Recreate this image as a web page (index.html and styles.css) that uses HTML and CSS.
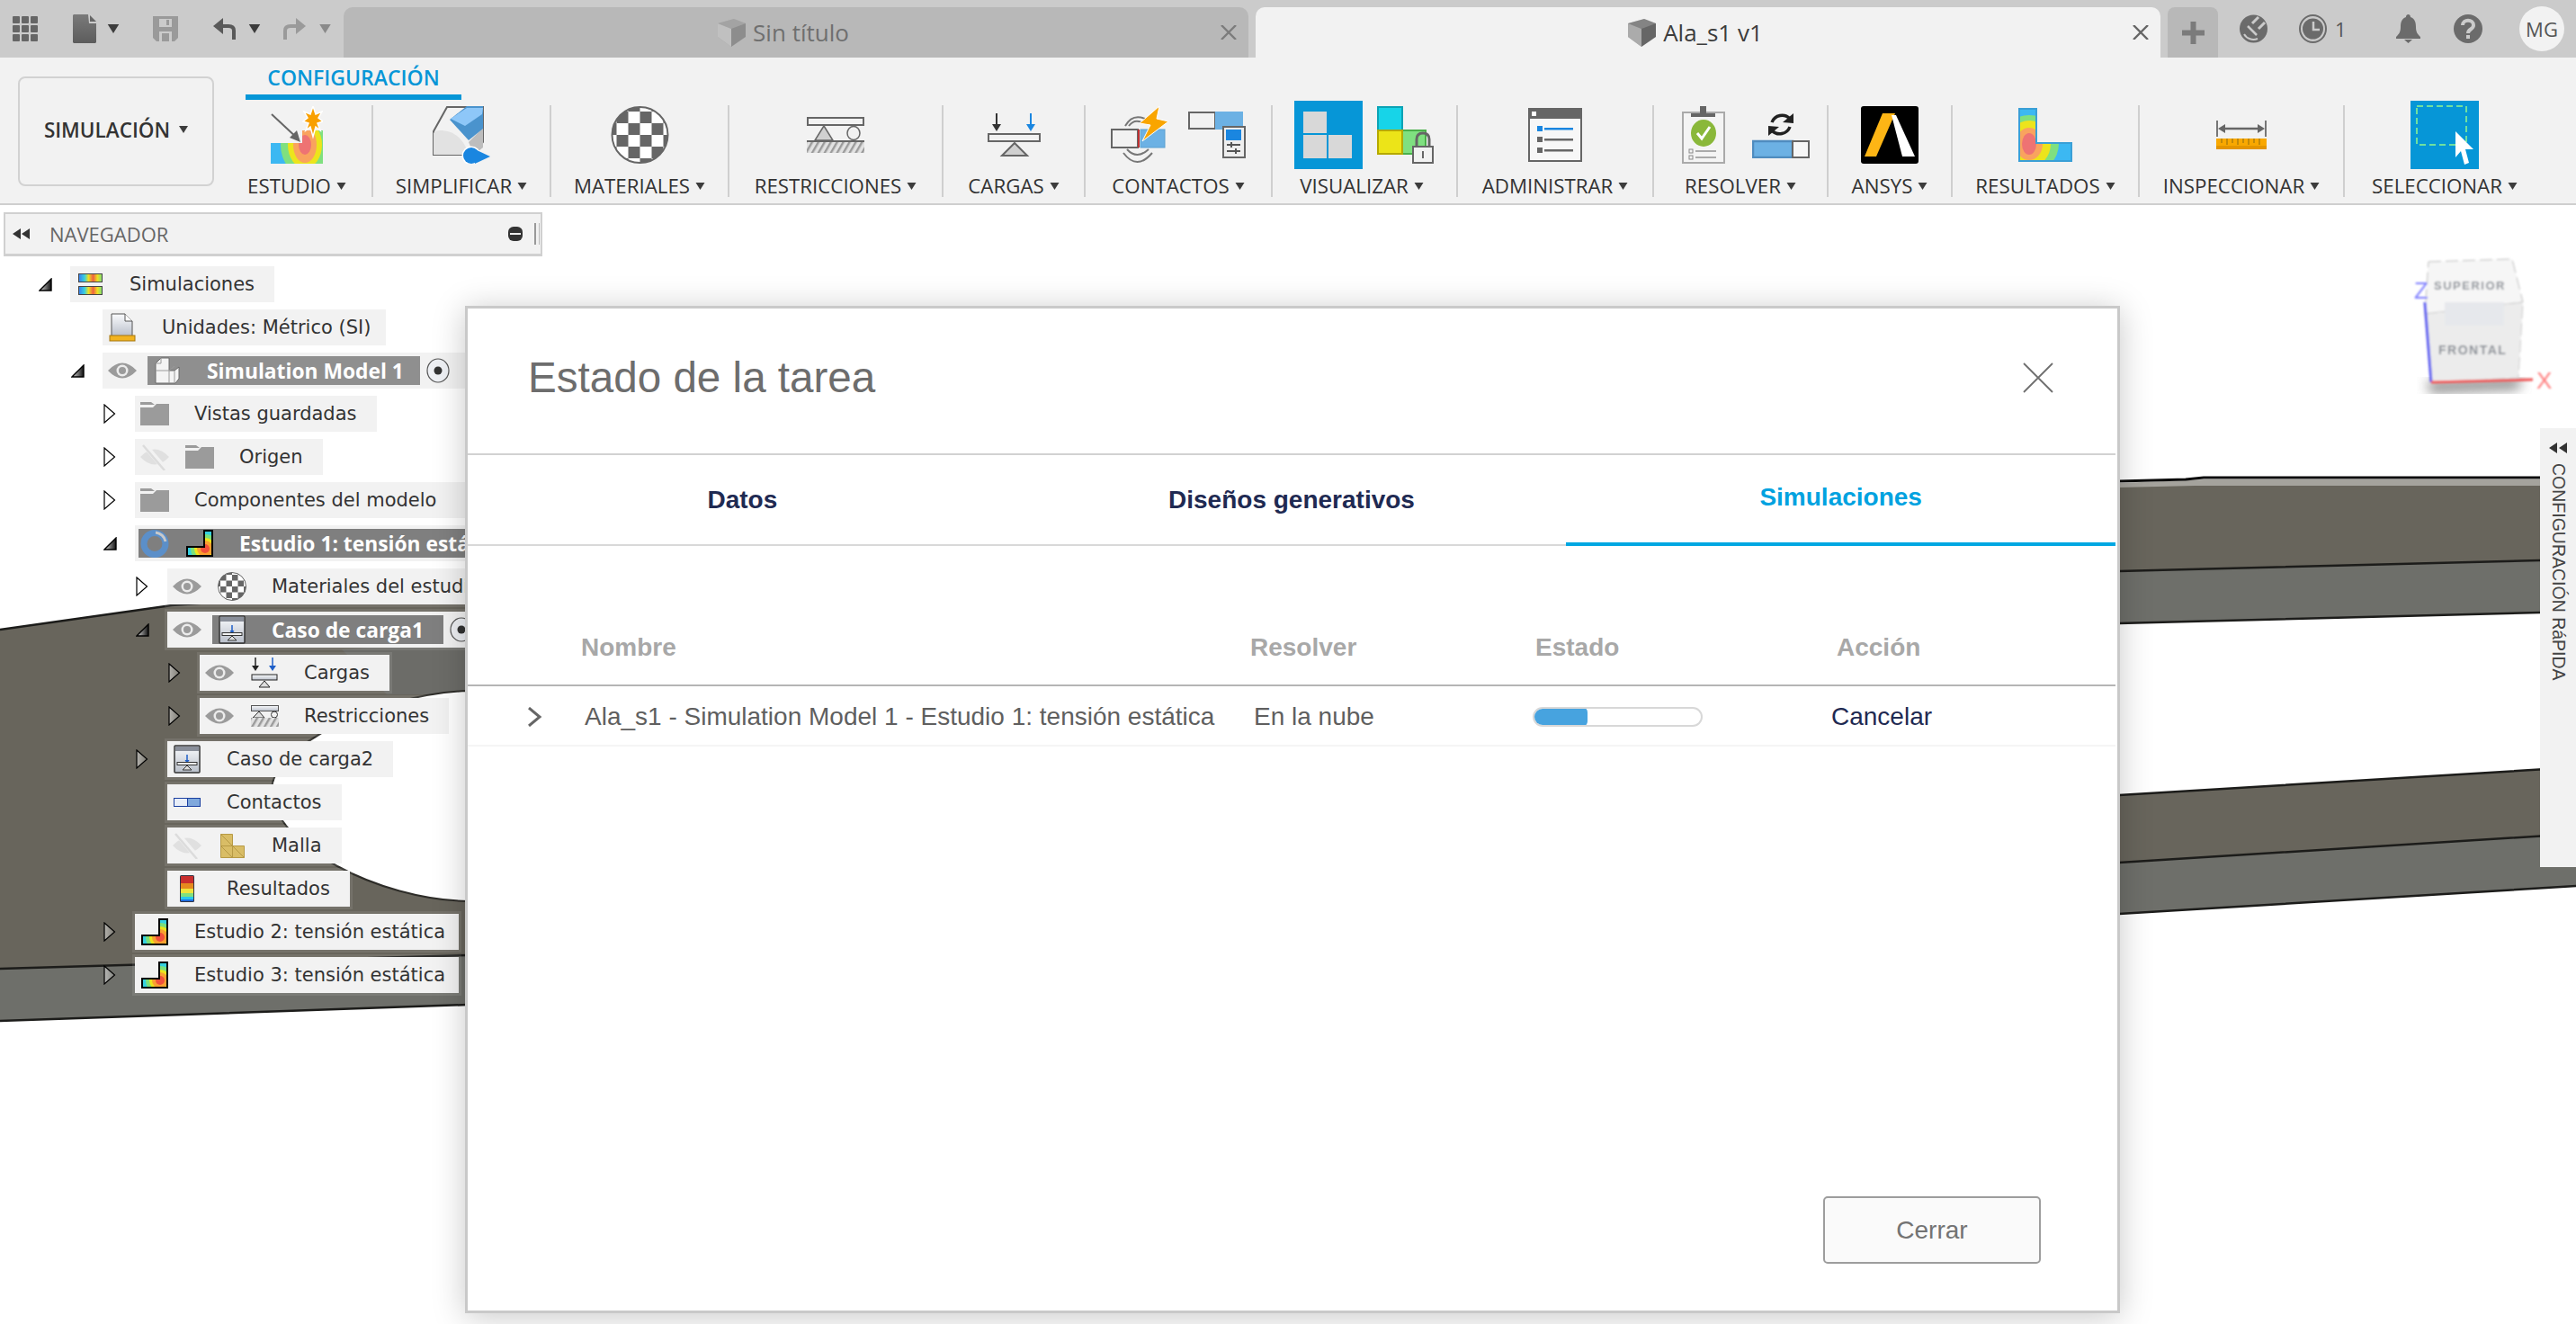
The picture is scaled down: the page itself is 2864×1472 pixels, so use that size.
FILE: index.html
```html
<!DOCTYPE html>
<html lang="es">
<head>
<meta charset="utf-8">
<title>Estado de la tarea</title>
<link rel="stylesheet" href="styles.css">
</head>
<body>
<svg class="sprite" width="0" height="0" aria-hidden="true">
  <defs>
    <clipPath id="fea-clip"><path d="M1 1H20V39H59V59H1Z"/></clipPath>
    <clipPath id="feb-clip"><path d="M20 1H29V29H1V19H20Z"/></clipPath>
    <clipPath id="ball-clip"><circle cx="32" cy="32" r="31"/></clipPath>
    <clipPath id="est-clip"><path d="M35 27H58V64H0V41H35Z"/></clipPath>
    <pattern id="chk" width="26" height="26" patternUnits="userSpaceOnUse" x="6" y="6">
      <rect width="13" height="13" fill="#666"/><rect x="13" y="13" width="13" height="13" fill="#666"/>
    </pattern>
    <pattern id="hatch" width="6" height="6" patternUnits="userSpaceOnUse" patternTransform="rotate(30)">
      <rect width="6" height="6" fill="#e2e2e2"/><rect width="2.4" height="6" fill="#9b9b9b"/>
    </pattern>
    <linearGradient id="grad-open" x1="0" y1="0" x2="1" y2="0"><stop offset="0" stop-color="#ddd"/><stop offset="1" stop-color="#111"/></linearGradient>
    <linearGradient id="grad-closed" x1="0" y1="0" x2="1" y2="0"><stop offset="0" stop-color="#fff" stop-opacity=".5"/><stop offset="1" stop-color="#fff" stop-opacity=".15"/></linearGradient>
    <linearGradient id="grad-box" x1="0" y1="0" x2="0" y2="1"><stop offset="0" stop-color="#fafbfd"/><stop offset="1" stop-color="#b9bfca"/></linearGradient>
    <linearGradient id="grad-file" x1="0" y1="0" x2="0" y2="1"><stop offset="0" stop-color="#7a7a7a"/><stop offset="1" stop-color="#5c5c5c"/></linearGradient>
    <linearGradient id="grad-rb" x1="0" y1="0" x2="1" y2="0"><stop offset="0" stop-color="#3a7cf0"/><stop offset=".25" stop-color="#35d0e0"/><stop offset=".42" stop-color="#eee020"/><stop offset=".62" stop-color="#f06040"/><stop offset=".8" stop-color="#eee020"/><stop offset="1" stop-color="#7be07b"/></linearGradient>

    <symbol id="fea" viewBox="0 0 60 60">
      <g clip-path="url(#fea-clip)">
        <rect width="60" height="60" fill="#3cb8f2"/>
        <ellipse cx="12" cy="40" rx="33" ry="32" fill="#7fe07f"/>
        <ellipse cx="12" cy="40" rx="24" ry="26" fill="#ece41c"/>
        <ellipse cx="12" cy="40" rx="15" ry="18" fill="#f9a35e"/>
        <ellipse cx="12" cy="40" rx="8" ry="12" fill="#ee7373"/>
      </g>
      <path d="M1 1H20V39H59V59H1Z" fill="none" stroke="#3a9fd6" stroke-width="2"/>
    </symbol>
    <symbol id="feb" viewBox="0 0 30 30">
      <g clip-path="url(#feb-clip)">
        <rect width="30" height="30" fill="#3a7cf0"/>
        <circle cx="21" cy="21" r="21" fill="#35d0e0"/>
        <circle cx="21" cy="21" r="16" fill="#7be07b"/>
        <circle cx="21" cy="21" r="12" fill="#ece41c"/>
        <circle cx="21" cy="21" r="9" fill="#f9a030"/>
        <circle cx="21" cy="21" r="5" fill="#f0503c"/>
      </g>
      <path d="M20 1H29V29H1V19H20Z" fill="none" stroke="#000" stroke-width="2"/>
    </symbol>
    <symbol id="ball" viewBox="0 0 64 64">
      <circle cx="32" cy="32" r="31" fill="#fff"/>
      <rect width="64" height="64" fill="url(#chk)" clip-path="url(#ball-clip)"/>
      <circle cx="32" cy="32" r="31" fill="none" stroke="#666" stroke-width="2"/>
    </symbol>
    <symbol id="eye" viewBox="0 0 32 20">
      <path d="M0 10Q16-7 32 10Q16 27 0 10Z" fill="#9b9b9b"/>
      <circle cx="16" cy="10" r="6.5" fill="#ececec"/><circle cx="16" cy="10" r="4" fill="#9b9b9b"/>
    </symbol>
    <symbol id="eyeoff" viewBox="0 0 32 30">
      <path d="M0 15Q16-2 32 15Q16 32 0 15Z" fill="#e0e0e0"/>
      <path d="M4 1L28 29" stroke="#f2f2f2" stroke-width="6"/><path d="M3 2L27 30" stroke="#dcdcdc" stroke-width="2.5"/>
    </symbol>
    <symbol id="folder" viewBox="0 0 32 26">
      <path d="M0 0H12L16 3H14H0Z" fill="#9b9b9b"/><path d="M0 6H14L18 2H32V26H0Z" fill="#9b9b9b"/>
    </symbol>
    <symbol id="tw-open" viewBox="0 0 15 15"><path d="M14 1V14H1Z" fill="url(#grad-open)" stroke="#000" stroke-width="1.4"/></symbol>
    <symbol id="tw-closed" viewBox="0 0 14 22"><path d="M1 1L12.5 11L1 21Z" fill="url(#grad-closed)" stroke="#000" stroke-width="1.2"/></symbol>
    <symbol id="caso" viewBox="0 0 30 32">
      <rect x="1" y="1" width="28" height="30" rx="1" fill="url(#grad-box)" stroke="#333" stroke-width="1.5"/>
      <rect x="2" y="2" width="26" height="5" fill="#8a8f9a"/>
      <path d="M15 11V19" stroke="#1f5fc8" stroke-width="1.5"/><path d="M12.5 17H17.5L15 21Z" fill="#1f5fc8"/>
      <rect x="4" y="19.500" width="22" height="3" fill="#f2f2f2" stroke="#333"/>
      <path d="M15 23L20 28H10Z" fill="#ddd" stroke="#333"/>
    </symbol>
    <symbol id="caret" viewBox="0 0 10 8"><path d="M0 0H10L5 8Z" fill="#3c3c3c"/></symbol>
    <symbol id="cube" viewBox="0 0 32 32">
      <path d="M1 6L19 1L32 6V21L16 32L1 21Z" fill="currentColor"/>
      <path d="M1 6L16 12V32L1 21Z" fill="#fff" opacity=".45"/>
      <path d="M1 6L19 1L32 6L16 12Z" fill="#fff" opacity=".2"/>
    </symbol>
  </defs>
</svg>

<div class="app">
  <svg class="scene" width="2864" height="1472" viewBox="0 0 2864 1472" aria-hidden="true">
    <defs>
      <filter id="blur1"><feGaussianBlur stdDeviation=".8"/></filter>
      <filter id="blur6"><feGaussianBlur stdDeviation="7"/></filter>
    </defs>
    <path d="M0 700L191 673L520 650V1062L0 1077Z" fill="#68655c"/>
    <path d="M0 1077L520 1062V1117L0 1135Z" fill="#6e6f6a"/>
    <path d="M380 722L520 712V772L430 772Z" fill="#6c6c68"/>
    <path d="M520 768C420 772 300 830 302 880C305 940 420 1000 520 1002Z" fill="#fff" stroke="#2d2c28" stroke-width="2"/>
    <path d="M0 700L191 673L520 650M0 1077L520 1062M0 1135L520 1117" fill="none" stroke="#1c1c1a" stroke-width="2.500"/>
    <path d="M2356 538H2864V623L2356 635Z" fill="#68655c"/>
    <path d="M2356 635L2864 622V680L2356 693Z" fill="#6e6f6a"/>
    <path d="M2356 537L2430 534L2450 533H2864V540H2440L2356 542Z" fill="#a5a39d"/>
    <path d="M2356 535L2430 533L2450 531H2864" fill="none" stroke="#0b0b0b" stroke-width="3"/>
    <path d="M2356 635L2864 622M2356 693L2864 680" fill="none" stroke="#1c1c1a" stroke-width="2.500"/>
    <path d="M2356 884L2864 853V927L2356 959Z" fill="#68655c"/>
    <path d="M2356 959L2864 927V985L2356 1016Z" fill="#6e6f6a"/>
    <path d="M2356 884L2864 853M2356 959L2864 927M2356 1016L2864 985" fill="none" stroke="#1c1c1a" stroke-width="2.500"/>
    <path d="M2698 425L2804 421L2800 432L2702 436Z" fill="#777" filter="url(#blur6)"/>
    <g filter="url(#blur1)">
      <path d="M2700 291L2793 288L2805 336L2696 349Z" fill="#f6f6f6" stroke="#bbb" stroke-dasharray="14 5"/>
      <path d="M2696 349L2805 336L2800 420L2703 425Z" fill="#ececec" stroke="#ccc" stroke-dasharray="14 5"/>
      <rect x="2718" y="336" width="66" height="26" fill="#e6e8ec"/>
      <text class="cube-text" x="2706" y="322">SUPERIOR</text>
      <text class="cube-text cube-front" x="2711" y="394">FRONTAL</text>
      <path d="M2696 336L2703 425" stroke="#5a5af0" stroke-width="3" fill="none"/>
      <path d="M2703 425L2816 422" stroke="#f05858" stroke-width="3" fill="none"/>
      <text class="axis axis-z" x="2684" y="332">Z</text>
      <text class="axis axis-x" x="2820" y="432">X</text>
    </g>
  </svg>

  <header class="topbar">
    <div class="tools">
      <svg class="t-grid" width="28" height="28" viewBox="0 0 28 28"><g fill="#666"><rect width="8" height="8" rx="1"/><rect x="10" width="8" height="8" rx="1"/><rect x="20" width="8" height="8" rx="1"/><rect y="10" width="8" height="8" rx="1"/><rect x="10" y="10" width="8" height="8" rx="1"/><rect x="20" y="10" width="8" height="8" rx="1"/><rect y="20" width="8" height="8" rx="1"/><rect x="10" y="20" width="8" height="8" rx="1"/><rect x="20" y="20" width="8" height="8" rx="1"/></g></svg>
      <svg class="t-file" width="26" height="32" viewBox="0 0 26 32"><path d="M1 0H17L18 10H26V31L25 32H1L0 31V1Z" fill="url(#grad-file)"/><path d="M19 1L26 8H19Z" fill="#666"/></svg>
      <svg class="t-c1" width="14" height="10"><use href="#caret"/></svg>
      <svg class="t-save" width="28" height="28" viewBox="0 0 28 28"><path d="M0 0H28V24L24 28H4L0 24Z" fill="#9a9a9a"/><rect x="7" y="3" width="14" height="9" fill="#cbcbcb"/><rect x="15" y="4" width="3" height="6" fill="#9a9a9a"/><rect x="7" y="17" width="14" height="11" fill="#cbcbcb"/><rect x="10" y="19" width="8" height="9" fill="#9a9a9a"/></svg>
      <svg class="t-undo" width="26" height="24" viewBox="0 0 26 24"><path d="M23 24V14Q23 9 17 9H5" fill="none" stroke="#595959" stroke-width="4"/><path d="M11 0L0 9L11 18Z" fill="#595959"/></svg>
      <svg class="t-c2" width="14" height="10"><use href="#caret"/></svg>
      <svg class="t-redo" width="26" height="24" viewBox="0 0 26 24"><path d="M3 24V14Q3 9 9 9H21" fill="none" stroke="#9a9a9a" stroke-width="4"/><path d="M15 0L26 9L15 18Z" fill="#9a9a9a"/></svg>
      <svg class="t-c3 dim" width="15" height="10"><use href="#caret"/></svg>
    </div>
    <div class="tab tab-off">
      <div class="tab-title"><svg class="cube cube-off" width="32" height="32"><use href="#cube"/></svg><span>Sin título</span></div>
      <svg class="tab-x" width="18" height="16" viewBox="0 0 18 16"><path d="M1 0L17 16M17 0L1 16" stroke="#7c7c7c" stroke-width="2.400"/></svg>
    </div>
    <div class="tab tab-on">
      <div class="tab-title"><svg class="cube cube-on" width="32" height="32"><use href="#cube"/></svg><span>Ala_s1 v1</span></div>
      <svg class="tab-x" width="18" height="16" viewBox="0 0 18 16"><path d="M1 0L17 16M17 0L1 16" stroke="#666" stroke-width="2.400"/></svg>
    </div>
    <div class="tab-add"><svg width="25" height="25" viewBox="0 0 25 25"><path d="M12.500 0V25M0 12.500H25" stroke="#7b7b7b" stroke-width="6"/></svg></div>
    <svg class="r-sync" width="31" height="32" viewBox="0 0 31 32"><circle cx="15.500" cy="16" r="15.500" fill="#6b6b6b"/><path d="M21 3L14 10M28 9L21 16" stroke="#cbcbcb" stroke-width="3"/><path d="M9 13L19 23" stroke="#cbcbcb" stroke-width="2.500"/><path d="M5 22A12 12 0 0 0 20 27" fill="none" stroke="#cbcbcb" stroke-width="2"/></svg>
    <svg class="r-clock" width="31" height="32" viewBox="0 0 31 32"><ellipse cx="15.500" cy="16" rx="14.500" ry="15" fill="none" stroke="#6b6b6b" stroke-width="2"/><circle cx="15.500" cy="16" r="11.500" fill="#6b6b6b"/><path d="M16 8V17H23" fill="none" stroke="#cbcbcb" stroke-width="2.500"/></svg>
    <span class="r-count">1</span>
    <svg class="r-bell" width="27" height="32" viewBox="0 0 27 32"><path d="M13.500 0C16 0 16 3 16 3C21 5 22 9 22 14C22 20 24 22 27 25V27H0V25C3 22 5 20 5 14C5 9 6 5 11 3C11 3 11 0 13.500 0Z" fill="#6b6b6b"/><path d="M9 28H18L13.500 32Z" fill="#6b6b6b"/></svg>
    <svg class="r-help" width="32" height="32" viewBox="0 0 32 32"><circle cx="16" cy="16" r="16" fill="#6b6b6b"/><path d="M10 12C10 5 22 5 22 12C22 17 16 16 16 21" fill="none" stroke="#cbcbcb" stroke-width="4"/><rect x="14" y="23" width="4" height="4" fill="#cbcbcb"/></svg>
    <div class="avatar">MG</div>
  </header>

  <section class="ribbon">
    <button class="mode"><span>SIMULACIÓN</span><svg width="10" height="8"><use href="#caret"/></svg></button>
    <div class="ribbon-main">
      <div class="rtab">CONFIGURACIÓN</div>
      <div class="groups">
        <div class="group">
          <div class="icons">
            <svg width="58" height="64" viewBox="0 0 58 64">
              <g clip-path="url(#est-clip)"><rect width="58" height="64" fill="#3cb8f2"/><ellipse cx="38" cy="43" rx="27" ry="34" fill="#7fe07f"/><ellipse cx="38" cy="43" rx="19" ry="26" fill="#ece41c"/><ellipse cx="38" cy="43" rx="13" ry="20" fill="#f9a35e"/><ellipse cx="38" cy="43" rx="7" ry="11" fill="#ee7373"/></g>
              <path d="M1 9L31 37" stroke="#666" stroke-width="2"/><path d="M33 40L21 35L29 27Z" fill="#666"/>
              <path d="M47 0L50 9L57 6L53 13L58 17L52 19L55 27L50 23L47 34L44 23L39 27L42 19L36 17L41 13L37 6L44 9Z" fill="#f9a000" stroke="#fff" stroke-width="1.500"/>
            </svg>
          </div>
          <div class="lbl">ESTUDIO<svg width="11" height="8"><use href="#caret"/></svg></div>
        </div>
        <div class="group">
          <div class="icons">
            <svg width="64" height="64" viewBox="0 0 64 64">
              <path d="M1 54V28L16 1H56V40L44 54Z" fill="#f2f2f2" stroke="#666" stroke-width="2"/>
              <path d="M1 54V30Q3 27 8 27C22 27 34 34 40 54Z" fill="#e2e2e2"/>
              <path d="M40 40L56 24V46L46 54Z" fill="#bdbdbd"/>
              <path d="M38 0H56V25L40 38L19 15Z" fill="#4a93cd"/>
              <path d="M38 2H56L55 9L36 22L20 14Z" fill="#8ec7f8"/>
              <circle cx="43" cy="55" r="10.500" fill="#fff"/><circle cx="43" cy="55" r="9" fill="#1a86e0"/><path d="M47 48L64 56L47 64Z" fill="#1a86e0"/>
            </svg>
          </div>
          <div class="lbl">SIMPLIFICAR<svg width="11" height="8"><use href="#caret"/></svg></div>
        </div>
        <div class="group">
          <div class="icons"><svg width="65" height="64"><use href="#ball"/></svg></div>
          <div class="lbl">MATERIALES<svg width="11" height="8"><use href="#caret"/></svg></div>
        </div>
        <div class="group">
          <div class="icons">
            <svg width="64" height="40" viewBox="0 0 64 40">
              <rect x="1" y="1" width="62" height="8" fill="#f2f2f2" stroke="#666" stroke-width="2"/>
              <path d="M19 10L29 26H9Z" fill="#d0d0d0" stroke="#666" stroke-width="1.500"/>
              <ellipse cx="52" cy="18" rx="7" ry="7.500" fill="#f2f2f2" stroke="#666" stroke-width="1.500"/>
              <rect y="26" width="64" height="2.500" fill="#666"/><rect y="28" width="64" height="12" fill="url(#hatch)"/>
            </svg>
          </div>
          <div class="lbl">RESTRICCIONES<svg width="11" height="8"><use href="#caret"/></svg></div>
        </div>
        <div class="group">
          <div class="icons">
            <svg width="59" height="48" viewBox="0 0 59 48">
              <path d="M10 0V14" stroke="#333" stroke-width="2"/><path d="M5 12H15L10 20Z" fill="#333"/>
              <path d="M48 0V14" stroke="#1a86e0" stroke-width="2"/><path d="M43 12H53L48 20Z" fill="#1a86e0"/>
              <rect x="1" y="23" width="57" height="8" fill="#f2f2f2" stroke="#666" stroke-width="2"/>
              <path d="M30 33L44 47H16Z" fill="#d0d0d0" stroke="#666" stroke-width="2"/>
            </svg>
          </div>
          <div class="lbl">CARGAS<svg width="11" height="8"><use href="#caret"/></svg></div>
        </div>
        <div class="group">
          <div class="icons gap22">
            <svg width="64" height="64" viewBox="0 0 64 64">
              <path d="M16 22Q24 8 38 14M20 22Q26 14 34 18" fill="none" stroke="#777" stroke-width="2"/>
              <path d="M14 52Q29 72 46 52M18 48Q29 60 42 48" fill="none" stroke="#777" stroke-width="2"/>
              <rect x="1" y="26" width="29" height="20" fill="#f2f2f2" stroke="#666" stroke-width="2"/>
              <rect x="33" y="26" width="27" height="20" fill="#6cb1e4" stroke="#5b9fd0"/>
              <rect x="30" y="26" width="2" height="20" fill="#c23030"/>
              <path d="M54 0L32 19L44 21L35 39L64 17L51 14Z" fill="#f9a500" stroke="#fff"/>
            </svg>
            <svg width="64" height="52" viewBox="0 0 64 52">
              <rect x="1" y="1" width="29" height="18" fill="#f2f2f2" stroke="#666" stroke-width="2"/>
              <rect x="30" width="31" height="20" fill="#6cb1e4"/>
              <rect x="39" y="17" width="24" height="34" fill="#eee" stroke="#666" stroke-width="2"/>
              <rect x="42" y="20" width="17" height="12" fill="#1a86e0"/>
              <path d="M43 37H58M43 44H58" stroke="#555" stroke-width="2"/><path d="M48 34V40M53 41V47" stroke="#555" stroke-width="2"/>
            </svg>
          </div>
          <div class="lbl">CONTACTOS<svg width="11" height="8"><use href="#caret"/></svg></div>
        </div>
        <div class="group">
          <div class="icons gap16">
            <svg width="76" height="76" viewBox="0 0 76 76">
              <rect width="76" height="76" fill="#0696d7"/>
              <g fill="#d8d8d8"><rect x="10" y="12" width="26" height="24"/><rect x="10" y="38" width="26" height="26"/><rect x="38" y="38" width="26" height="26"/></g>
            </svg>
            <svg width="64" height="64" viewBox="0 0 64 64">
              <rect x="1" y="1" width="27" height="26" fill="#17d4e8" stroke="#0ca3b5" stroke-width="2"/>
              <rect x="28" y="27" width="26" height="26" fill="#7fe080" stroke="#4aaf4a" stroke-width="2"/>
              <rect x="1" y="27" width="27" height="26" fill="#ece418" stroke="#b5a900" stroke-width="2"/>
              <path d="M44 46V37Q44 30 51 30Q58 30 58 37V46" fill="none" stroke="#666" stroke-width="3"/>
              <rect x="40" y="45" width="22" height="18" fill="#f2f2f2" stroke="#666" stroke-width="2"/><path d="M51 50V58" stroke="#666" stroke-width="2"/>
            </svg>
          </div>
          <div class="lbl lbl-left">VISUALIZAR<svg width="11" height="8"><use href="#caret"/></svg></div>
        </div>
        <div class="group">
          <div class="icons">
            <svg width="60" height="60" viewBox="0 0 60 60">
              <rect x="1" y="1" width="58" height="58" fill="#f7f7f7" stroke="#666" stroke-width="2"/>
              <rect width="60" height="12" fill="#666"/><rect x="4" y="4" width="5" height="5" fill="#fff"/>
              <rect x="10" y="20" width="6" height="6" fill="#1a86e0"/><rect x="18" y="22" width="32" height="2.500" fill="#1a86e0"/>
              <rect x="10" y="32" width="6" height="6" fill="#666"/><rect x="18" y="34" width="32" height="2.500" fill="#666"/>
              <rect x="10" y="44" width="6" height="6" fill="#666"/><rect x="18" y="46" width="32" height="2.500" fill="#666"/>
            </svg>
          </div>
          <div class="lbl">ADMINISTRAR<svg width="11" height="8"><use href="#caret"/></svg></div>
        </div>
        <div class="group">
          <div class="icons gap30 shift">
            <svg width="48" height="64" viewBox="0 0 48 64">
              <rect x="1" y="7" width="46" height="56" fill="#f4f4f4" stroke="#aaa" stroke-width="2"/>
              <path d="M10 12V8H20V0H27V8H37V12Z" fill="#666"/>
              <ellipse cx="24" cy="30" rx="14" ry="15" fill="#8ab83a"/><path d="M17 30L22 36L31 23" fill="none" stroke="#fff" stroke-width="3"/>
              <rect x="8" y="48" width="4" height="4" fill="none" stroke="#888"/><rect x="8" y="55" width="4" height="4" fill="none" stroke="#888"/>
              <path d="M15 50H38M15 57H38" stroke="#aaa" stroke-width="2"/>
            </svg>
            <svg width="64" height="52" viewBox="0 0 64 52">
              <path d="M22 12A12 12 0 0 1 42 8" fill="none" stroke="#222" stroke-width="3.500"/><path d="M34 12L46 13L46 2Z" fill="#222"/>
              <path d="M42 17A12 12 0 0 1 22 21" fill="none" stroke="#222" stroke-width="3.500"/><path d="M30 17L18 16L18 27Z" fill="#222"/>
              <rect x="1" y="33" width="44" height="18" fill="#6cb1e4" stroke="#4f8cbf" stroke-width="2.500"/>
              <rect x="45" y="33" width="18" height="18" fill="#f7f7f7" stroke="#666" stroke-width="2"/>
            </svg>
          </div>
          <div class="lbl">RESOLVER<svg width="11" height="8"><use href="#caret"/></svg></div>
        </div>
        <div class="group">
          <div class="icons">
            <svg width="64" height="64" viewBox="0 0 64 64">
              <rect width="64" height="64" rx="3" fill="#000"/>
              <path d="M24 8H38L17 56H4Z" fill="#fdb515"/>
              <path d="M34 10H39L60 56H46Z" fill="#fff"/>
            </svg>
          </div>
          <div class="lbl">ANSYS<svg width="11" height="8"><use href="#caret"/></svg></div>
        </div>
        <div class="group">
          <div class="icons"><svg width="60" height="60"><use href="#fea"/></svg></div>
          <div class="lbl">RESULTADOS<svg width="11" height="8"><use href="#caret"/></svg></div>
        </div>
        <div class="group">
          <div class="icons">
            <svg width="56" height="32" viewBox="0 0 56 32">
              <path d="M1 0V18M55 0V18" stroke="#777" stroke-width="2"/>
              <path d="M6 9H50" stroke="#666" stroke-width="2.500"/><path d="M10 4V14L2 9ZM46 4V14L54 9Z" fill="#666"/>
              <rect y="20" width="56" height="12" fill="#f9a800"/><rect y="28" width="56" height="4" fill="#e49500"/>
              <path d="M6 20V25M12 20V27M18 20V25M24 20V27M30 20V25M36 20V27M42 20V25M48 20V27" stroke="#8a6a10" stroke-width="1"/>
            </svg>
          </div>
          <div class="lbl">INSPECCIONAR<svg width="11" height="8"><use href="#caret"/></svg></div>
        </div>
        <div class="group">
          <div class="icons">
            <svg width="76" height="76" viewBox="0 0 76 76">
              <rect width="76" height="76" fill="#0696d7"/>
              <rect x="7" y="6" width="55" height="43" fill="none" stroke="#6fe0a0" stroke-width="2" stroke-dasharray="7 4"/>
              <path d="M50 34V63L56 56L60 71L65 69L61 54L70 54Z" fill="#fff"/>
            </svg>
          </div>
          <div class="lbl">SELECCIONAR<svg width="11" height="8"><use href="#caret"/></svg></div>
        </div>
      </div>
    </div>
  </section>

  <div class="nav-head">
    <svg class="nav-back" width="19" height="12" viewBox="0 0 19 12"><path d="M9 0V12L0 6ZM19 0V12L10 6Z" fill="#333"/></svg>
    <span class="nav-title">NAVEGADOR</span>
    <svg class="nav-min" width="16" height="16" viewBox="0 0 16 16"><rect width="16" height="16" rx="6" fill="#333"/><rect x="2" y="7" width="12" height="2" fill="#eee"/></svg>
    <span class="nav-grip"></span>
  </div>

  <nav class="tree">
    <div class="row d0">
      <span class="tw"><svg width="15" height="15"><use href="#tw-open"/></svg></span>
      <div class="pill"><div class="item">
        <span class="ic"><svg width="27" height="24" viewBox="0 0 27 24"><rect x=".5" y=".5" width="26" height="9" fill="url(#grad-rb)" stroke="#444"/><rect x=".5" y="14.500" width="26" height="9" fill="url(#grad-rb)" stroke="#444"/></svg></span>
        <span>Simulaciones</span>
      </div></div>
    </div>
    <div class="row d1">
      <span class="tw"></span>
      <div class="pill"><div class="item item-tight">
        <span class="ic"><svg width="30" height="32" viewBox="0 0 30 32"><path d="M3 1H18L26 9V26H3Z" fill="url(#grad-box)" stroke="#555"/><path d="M18 1V9H26" fill="#fff" stroke="#555"/><rect x="1" y="25" width="28" height="6" fill="#f2b320" stroke="#a5770e"/></svg></span>
        <span>Unidades: Métrico (SI)</span>
      </div></div>
    </div>
    <div class="row d1">
      <span class="tw"><svg width="15" height="15"><use href="#tw-open"/></svg></span>
      <div class="pill">
        <span class="eye"><svg width="32" height="20"><use href="#eye"/></svg></span>
        <div class="sel sel-model"><div class="item item-bar">
          <span class="ic"><svg width="30" height="30" viewBox="0 0 30 30"><path d="M2 7L8 1H17V15H23L28 11V24L24 29H2Z" fill="#f4f4f4" stroke="#6a6a6a"/><path d="M2 15H17V29M8 1V7H2M17 15L23 10M23 15V29" fill="none" stroke="#9a9a9a"/></svg></span>
          <span>Simulation Model 1</span>
        </div></div>
        <svg class="radio" width="26" height="28" viewBox="0 0 26 28"><ellipse cx="13" cy="14" rx="12" ry="13" fill="#eef0f4" stroke="#555" stroke-width="1.200"/><circle cx="13" cy="14" r="4.500" fill="#333"/></svg>
      </div>
    </div>
    <div class="row d2">
      <span class="tw"><svg width="14" height="22"><use href="#tw-closed"/></svg></span>
      <div class="pill"><div class="item"><span class="ic"><svg width="32" height="26"><use href="#folder"/></svg></span><span>Vistas guardadas</span></div></div>
    </div>
    <div class="row d2">
      <span class="tw"><svg width="14" height="22"><use href="#tw-closed"/></svg></span>
      <div class="pill">
        <span class="eye"><svg width="32" height="30"><use href="#eyeoff"/></svg></span>
        <div class="item"><span class="ic"><svg width="32" height="26"><use href="#folder"/></svg></span><span>Origen</span></div>
      </div>
    </div>
    <div class="row d2">
      <span class="tw"><svg width="14" height="22"><use href="#tw-closed"/></svg></span>
      <div class="pill pill-under"><div class="item"><span class="ic"><svg width="32" height="26"><use href="#folder"/></svg></span><span>Componentes del modelo</span></div></div>
    </div>
    <div class="row d2">
      <span class="tw"><svg width="15" height="15"><use href="#tw-open"/></svg></span>
      <div class="pill pill-spin">
        <div class="sel sel-study">
          <svg class="spinner" width="32" height="31" viewBox="0 0 32 31"><circle cx="16" cy="15.500" r="12" fill="none" stroke="#5b8fc9" stroke-width="7"/><path d="M17 3A12.500 12.500 0 0 1 28 13" fill="none" stroke="#c9c9c9" stroke-width="3"/></svg>
          <div class="item"><span class="ic"><svg width="30" height="30"><use href="#feb"/></svg></span><span>Estudio 1: tensión estática</span></div>
        </div>
      </div>
    </div>
    <div class="row d3">
      <span class="tw"><svg width="14" height="22"><use href="#tw-closed"/></svg></span>
      <div class="pill">
        <span class="eye"><svg width="32" height="20"><use href="#eye"/></svg></span>
        <div class="item"><span class="ic"><svg width="32" height="32"><use href="#ball"/></svg></span><span>Materiales del estudio</span></div>
      </div>
    </div>
    <div class="row d3">
      <span class="tw"><svg width="15" height="15"><use href="#tw-open"/></svg></span>
      <div class="pill">
        <span class="eye"><svg width="32" height="20"><use href="#eye"/></svg></span>
        <div class="sel sel-case"><div class="item"><span class="ic"><svg width="30" height="32"><use href="#caso"/></svg></span><span>Caso de carga1</span></div></div>
        <svg class="radio" width="26" height="28" viewBox="0 0 26 28"><ellipse cx="13" cy="14" rx="12" ry="13" fill="#eef0f4" stroke="#555" stroke-width="1.200"/><circle cx="13" cy="14" r="4.500" fill="#333"/></svg>
      </div>
    </div>
    <div class="row d4">
      <span class="tw"><svg width="14" height="22"><use href="#tw-closed"/></svg></span>
      <div class="pill">
        <span class="eye"><svg width="32" height="20"><use href="#eye"/></svg></span>
        <div class="item"><span class="ic"><svg width="30" height="34" viewBox="0 0 30 34"><path d="M5 0V12" stroke="#222" stroke-width="1.500"/><path d="M1 9H9L5 15Z" fill="#222"/><path d="M24 0V12" stroke="#1f5fc8" stroke-width="1.500"/><path d="M20 9H28L24 15Z" fill="#1f5fc8"/><rect x="1" y="19" width="28" height="6" fill="url(#grad-box)" stroke="#222"/><path d="M15 26L21 33H9Z" fill="#ddd" stroke="#222"/></svg></span><span>Cargas</span></div>
      </div>
    </div>
    <div class="row d4">
      <span class="tw"><svg width="14" height="22"><use href="#tw-closed"/></svg></span>
      <div class="pill">
        <span class="eye"><svg width="32" height="20"><use href="#eye"/></svg></span>
        <div class="item"><span class="ic"><svg width="31" height="24" viewBox="0 0 31 24"><rect x=".5" y=".5" width="30" height="6" fill="url(#grad-box)" stroke="#555"/><path d="M9 7L15 14H2Z" fill="#ddd" stroke="#333"/><circle cx="26" cy="10.500" r="3.500" fill="#f2f2f2" stroke="#333"/><rect y="14" width="31" height="10" fill="url(#hatch)"/></svg></span><span>Restricciones</span></div>
      </div>
    </div>
    <div class="row d3">
      <span class="tw"><svg width="14" height="22"><use href="#tw-closed"/></svg></span>
      <div class="pill"><div class="item"><span class="ic"><svg width="30" height="32"><use href="#caso"/></svg></span><span>Caso de carga2</span></div></div>
    </div>
    <div class="row d3">
      <span class="tw"></span>
      <div class="pill"><div class="item"><span class="ic"><svg width="30" height="10" viewBox="0 0 30 10"><rect x=".5" y=".5" width="15" height="9" fill="#e8eef8" stroke="#1a3fa0"/><rect x="15.500" y=".5" width="14" height="9" fill="#7fa8dc" stroke="#1a3fa0"/></svg></span><span>Contactos</span></div></div>
    </div>
    <div class="row d3">
      <span class="tw"></span>
      <div class="pill">
        <span class="eye"><svg width="32" height="30"><use href="#eyeoff"/></svg></span>
        <div class="item"><span class="ic"><svg width="27" height="27" viewBox="0 0 27 27"><path d="M.5.5H13.500V13.500H26.500V26.500H.5Z" fill="#d9bd66" stroke="#b79a45"/><path d="M.5 13.500H13.500V26.500M.5.5L13.500 13.500M.5 13.500L13.500 26.500M13.500 13.500L26.500 26.500" fill="none" stroke="#b79a45"/></svg></span><span>Malla</span></div>
      </div>
    </div>
    <div class="row d3">
      <span class="tw"></span>
      <div class="pill"><div class="item"><span class="ic"><svg width="16" height="30" viewBox="0 0 16 30"><rect width="16" height="30" rx="1.500" fill="#334"/><rect x="1" y="1" width="14" height="8" fill="#c92e2e"/><rect x="1" y="9" width="14" height="6" fill="#e68a1e"/><rect x="1" y="15" width="14" height="5" fill="#eee43c"/><rect x="1" y="20" width="14" height="4" fill="#7fe07f"/><rect x="1" y="24" width="14" height="3" fill="#27c7ee"/><rect x="1" y="27" width="14" height="2" fill="#1e6fe0"/></svg></span><span>Resultados</span></div></div>
    </div>
    <div class="row d2">
      <span class="tw"><svg width="14" height="22"><use href="#tw-closed"/></svg></span>
      <div class="pill"><div class="item item-end"><span class="ic"><svg width="30" height="30"><use href="#feb"/></svg></span><span>Estudio 2: tensión estática</span></div></div>
    </div>
    <div class="row d2">
      <span class="tw"><svg width="14" height="22"><use href="#tw-closed"/></svg></span>
      <div class="pill"><div class="item item-end"><span class="ic"><svg width="30" height="30"><use href="#feb"/></svg></span><span>Estudio 3: tensión estática</span></div></div>
    </div>
  </nav>

  <aside class="quick">
    <svg width="26" height="12" viewBox="0 0 26 12"><path d="M12 0V12L3 6ZM23 0V12L14 6Z" fill="#333"/></svg>
    <span class="quick-text">CONFIGURACIÓN RáPIDA</span>
  </aside>

  <div class="dialog">
    <div class="dlg-head">
      <h1>Estado de la tarea</h1>
      <svg width="34" height="34" viewBox="0 0 34 34"><path d="M1 1L33 33M33 1L1 33" stroke="#6f6f6f" stroke-width="1.800"/></svg>
    </div>
    <div class="dlg-tabs">
      <div class="dtab">Datos</div>
      <div class="dtab">Diseños generativos</div>
      <div class="dtab dtab-on">Simulaciones</div>
    </div>
    <div class="tbl tbl-head">
      <span></span><span>Nombre</span><span>Resolver</span><span class="h-state">Estado</span><span class="h-act">Acción</span>
    </div>
    <div class="tbl tbl-row">
      <svg class="chev" width="17" height="22" viewBox="0 0 17 22"><path d="M2 1L14 11L2 21" fill="none" stroke="#666" stroke-width="3"/></svg>
      <span class="c-name">Ala_s1 - Simulation Model 1 - Estudio 1: tensión estática</span>
      <span class="c-solver">En la nube</span>
      <div class="progress"><div class="progress-fill" style="width:33%"></div></div>
      <span class="c-act">Cancelar</span>
    </div>
    <div class="dlg-foot"><button class="close-btn">Cerrar</button></div>
  </div>
</div>
</body>
</html>
```

FILE: styles.css
```css
* { box-sizing: border-box; }
html, body { margin: 0; padding: 0; background: #fff; }
body { width: 2864px; height: 1472px; overflow: hidden; font-family: "Open Sans", sans-serif; }
svg { display: block; flex: none; }
.sprite { position: absolute; }
.app { position: relative; width: 2864px; height: 1472px; overflow: hidden; background: #fff; }
.scene { position: absolute; left: 0; top: 0; }
.cube-text { font: 700 13px "Liberation Sans", sans-serif; letter-spacing: 1.5px; fill: #8a8f96; }
.cube-front { font-size: 14px; }
.axis { font: 400 26px "Liberation Sans", sans-serif; }
.axis-z { fill: #8080ff; }
.axis-x { fill: #ff8080; }

/* top bar */
.topbar { position: relative; display: flex; align-items: center; height: 64px; background: #cbcbcb; }
.tools { display: flex; align-items: center; width: 382px; height: 64px; }
.t-grid { margin-left: 14px; }
.t-file { margin-left: 39px; }
.t-c1 { margin-left: 12px; }
.t-save { margin-left: 37px; }
.t-undo { margin-left: 39px; }
.t-c2 { margin-left: 13px; }
.t-redo { margin-left: 24px; }
.t-c3 { margin-left: 14px; }
.dim { opacity: .45; }
.tab { display: flex; align-items: center; align-self: flex-end; width: 1006px; height: 56px; border-radius: 10px 10px 0 0; padding-right: 13px; }
.tab-off { background: #b8b8b8; color: #6f6f6f; margin-right: 8px; }
.tab-on { background: #f2f2f2; color: #3c3c3c; margin-right: 8px; }
.tab-title { flex: 1; display: flex; align-items: center; justify-content: center; gap: 8px; font-size: 26px; padding-left: 2px; }
.cube-off { color: #8d8d8d; }
.cube-on { color: #666; }
.tab-add { display: flex; align-items: center; justify-content: center; align-self: flex-end; width: 56px; height: 56px; background: #b8b8b8; border-radius: 8px 8px 0 0; }
.r-sync { margin-left: 24px; }
.r-clock { margin-left: 35px; }
.r-count { margin-left: 9px; width: 12px; font-size: 22px; color: #555; }
.r-bell { margin-left: 56px; }
.r-help { margin-left: 37px; }
.avatar { display: flex; align-items: center; justify-content: center; width: 50px; height: 50px; margin-left: 41px; border-radius: 50%; background: #f2f2f2; color: #555; font-size: 22px; }

/* ribbon */
.ribbon { display: flex; height: 164px; background: #f2f2f2; border-bottom: 2px solid #cfcfcf; }
.mode { display: flex; align-items: center; justify-content: center; gap: 10px; width: 218px; height: 122px; margin: 21px 0 0 20px; padding: 0 0 4px; background: #f2f2f2; border: 2px solid #d2d2d2; border-radius: 8px; font: 600 22.500px "Open Sans", sans-serif; color: #333; }
.ribbon-main { margin-left: 9px; flex: 1; }
.rtab { width: 240px; height: 47px; margin-left: 26px; border-bottom: 6px solid #0696d7; text-align: center; font-weight: 600; font-size: 23px; line-height: 44px; color: #0696d7; }
.groups { display: grid; grid-template-columns: 168px 198px 198px 238px 158px 208px 206px 218px 194px 138px 208px 228px 222px; margin-top: 6px; height: 102px; }
.group { display: flex; flex-direction: column; align-items: center; height: 102px; border-right: 2px solid #cfcfcf; }
.group:last-child { border-right: 0; }
.icons { display: flex; align-items: center; justify-content: center; height: 66px; }
.gap22 { gap: 22px; }
.gap16 { gap: 16px; }
.gap30 { gap: 30px; }
.shift { margin-left: 12px; }
.lbl { display: flex; align-items: center; gap: 6px; height: 24px; margin-top: 12px; font-size: 22.300px; line-height: 22px; color: #333; white-space: nowrap; }
.lbl-left { margin-right: 6px; }

/* navigator */
.nav-head { position: relative; display: flex; align-items: center; width: 599px; height: 49px; margin: 8px 0 0 4px; background: #f2f2f2; border: 2px solid #d0d0d0; border-bottom-width: 3px; }
.nav-back { margin-left: 8px; }
.nav-title { margin-left: 22px; flex: 1; font-size: 22px; color: #666; }
.nav-min { margin-right: 13px; }
.nav-grip { width: 6px; height: 24px; margin-right: 1px; border-left: 2px solid #999; border-right: 1px solid #bbb; }
.tree { position: relative; display: flex; flex-direction: column; gap: 8px; margin-top: 11px; font: 400 21px "DejaVu Sans", sans-serif; color: #333; }
.row { display: flex; align-items: center; height: 40px; }
.d0 { margin-left: 43px; }
.d1 { margin-left: 79px; }
.d2 { margin-left: 115px; }
.d3 { margin-left: 151px; }
.d4 { margin-left: 187px; }
.tw { display: block; width: 35px; flex: none; }
.pill { display: flex; align-items: center; height: 40px; background: #f2f2f2; box-shadow: 0 0 0 3px rgba(255,255,255,.09); white-space: nowrap; }
.pill-under { padding-right: 30px; }
.pill-spin { padding-left: 4px; }
.item { display: flex; align-items: center; padding-right: 22px; }
.item-tight { padding-right: 17px; }
.item-bar { padding-right: 18px; }
.item-end { padding-right: 15px; }
.ic { display: flex; align-items: center; justify-content: center; width: 44px; margin-right: 22px; flex: none; }
.eye { display: flex; align-items: center; width: 50px; padding-left: 6px; flex: none; }
.sel { display: flex; align-items: center; height: 32px; color: #fff; font: 700 22.800px "Open Sans", sans-serif; }
.sel-model { background: #8f8f8f; }
.sel-study { background: #7f7f7f; }
.sel-case { background: #7f7f7f; }
.spinner { margin: 0 12px 0 2px; }
.radio { margin: 0 18px 0 7px; }

/* quick panel */
.quick { position: absolute; left: 2824px; top: 476px; display: flex; flex-direction: column; align-items: center; width: 40px; height: 488px; padding-top: 16px; background: #f2f2f2; color: #444; }
.quick-text { margin-top: 11px; writing-mode: vertical-rl; font: 400 19.500px "Liberation Sans", sans-serif; white-space: nowrap; }

/* dialog */
.dialog { position: absolute; left: 517px; top: 340px; display: flex; flex-direction: column; width: 1840px; height: 1120px; padding-right: 2px; background: #fff; border: 3px solid #c9c9c9; box-shadow: 0 4px 34px rgba(0,0,0,.22); font-family: "Liberation Sans", sans-serif; }
.dlg-head { display: flex; align-items: center; justify-content: space-between; height: 163px; padding: 0 69px 8px 67px; border-bottom: 2px solid #d2d2d2; flex: none; }
.dlg-head h1 { margin: 0; font-size: 47.600px; font-weight: 400; color: #6d6d6d; }
.dlg-tabs { display: grid; grid-template-columns: repeat(3, 1fr); height: 101px; border-bottom: 2px solid #d8d8d8; flex: none; }
.dtab { position: relative; display: flex; align-items: center; justify-content: center; padding-bottom: 2px; font-size: 28px; font-weight: 700; color: #1f2a52; }
.dtab-on { color: #00a2e0; height: 101px; padding-bottom: 3px; border-bottom: 4px solid #00a7e2; }
.tbl { display: grid; grid-template-columns: 126px 744px 315px 331px 1fr; align-items: center; flex: none; }
.tbl-head { height: 156px; padding-top: 72px; border-bottom: 2px solid #b5b5b5; font-size: 28px; font-weight: 700; color: #a8a8a8; }
.h-state { padding-left: 2px; }
.h-act { padding-left: 6px; }
.tbl-row { height: 67px; padding-top: 2px; border-bottom: 2px solid #f5f5f5; font-size: 28px; color: #5f5f5f; }
.chev { margin-left: 66px; }
.c-name { padding-left: 4px; white-space: nowrap; }
.c-solver { padding-left: 4px; }
.c-act { color: #1f2a52; }
.progress { width: 189px; height: 22px; border: 2px solid #d8d8d8; border-radius: 11px; overflow: hidden; margin-left: -1px; }
.progress-fill { margin: -2px 0 0 -2px; height: 22px; background: #47a3df; border-radius: 11px 6px 6px 11px; }
.dlg-foot { display: flex; justify-content: flex-end; margin-top: auto; padding: 0 83px 52px 0; }
.close-btn { width: 242px; height: 75px; background: #fafafa; border: 2px solid #9d9d9d; border-radius: 5px; font: 400 28px "Liberation Sans", sans-serif; color: #737373; }
```
